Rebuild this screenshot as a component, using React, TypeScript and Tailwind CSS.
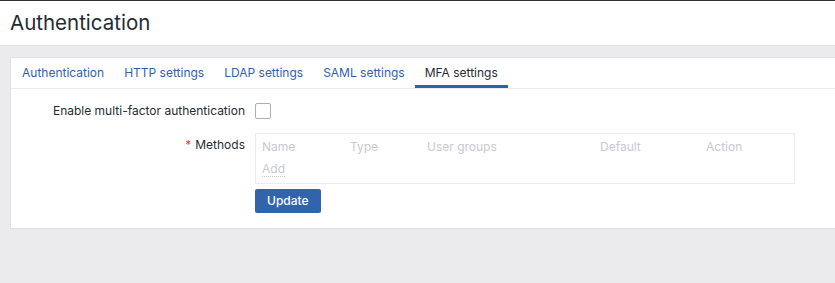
import React from 'react';

const tabs = ['Authentication', 'HTTP settings', 'LDAP settings', 'SAML settings', 'MFA settings'];

const App: React.FC = () => {
  const active = 'MFA settings';

  return (
    <div className="min-h-[283px] bg-[#ebebed] font-['Inter',sans-serif] text-[12px] text-[#1f2c33] border-t border-[#333]">
      <header className="h-[45px] bg-white border-b border-[#dfe1e5] px-[10px] flex items-center">
        <h1 className="text-[20.5px] leading-none text-[#1f2c33]">Authentication</h1>
      </header>

      <div className="pt-[11px] pl-[10px]">
        <div className="bg-white border border-r-0 border-[#dfe1e5] h-[172px]">
          <nav className="flex h-[31px] border-b border-[#ebebed] pl-[1px]">
            {tabs.map((tab) => (
              <div
                key={tab}
                className={
                  tab === active
                    ? 'px-[10px] flex items-center border-b-[3px] border-[#2f5fad] pt-[3px] text-[#1f2c33]'
                    : 'px-[10px] flex items-center text-[#2f5fb3]'
                }
              >
                {tab}
              </div>
            ))}
          </nav>

          <div className="pt-[14px]">
            <div className="flex items-center h-[16px]">
              <div className="w-[244px] text-right pr-[10px]">Enable multi-factor authentication</div>
              <div className="w-[16px] h-[16px] border border-[#aab0b5] rounded-[2px]" />
            </div>

            <div className="flex mt-[14px]">
              <div className="w-[244px] text-right pr-[10px] pt-[3px]">
                <span className="text-[#d64545] mr-[4px]">*</span>Methods
              </div>
              <div>
                <div className="w-[540px] h-[51px] border border-[#ebebed] px-[6px] pt-[3px] text-[#c6cad0]">
                  <div className="grid grid-cols-[88px_77px_173px_106px_1fr] h-[20px] items-center">
                    <span>Name</span>
                    <span>Type</span>
                    <span>User groups</span>
                    <span>Default</span>
                    <span>Action</span>
                  </div>
                  <div className="h-[24px] flex items-center">
                    <span className="border-b border-dotted border-[#c6cad0] leading-[15px]">Add</span>
                  </div>
                </div>
                <button className="mt-[5px] h-[24px] px-[12px] bg-[#3264ac] text-white rounded-[2px] font-medium">
                  Update
                </button>
              </div>
            </div>
          </div>
        </div>
      </div>
    </div>
  );
};

export default App;
